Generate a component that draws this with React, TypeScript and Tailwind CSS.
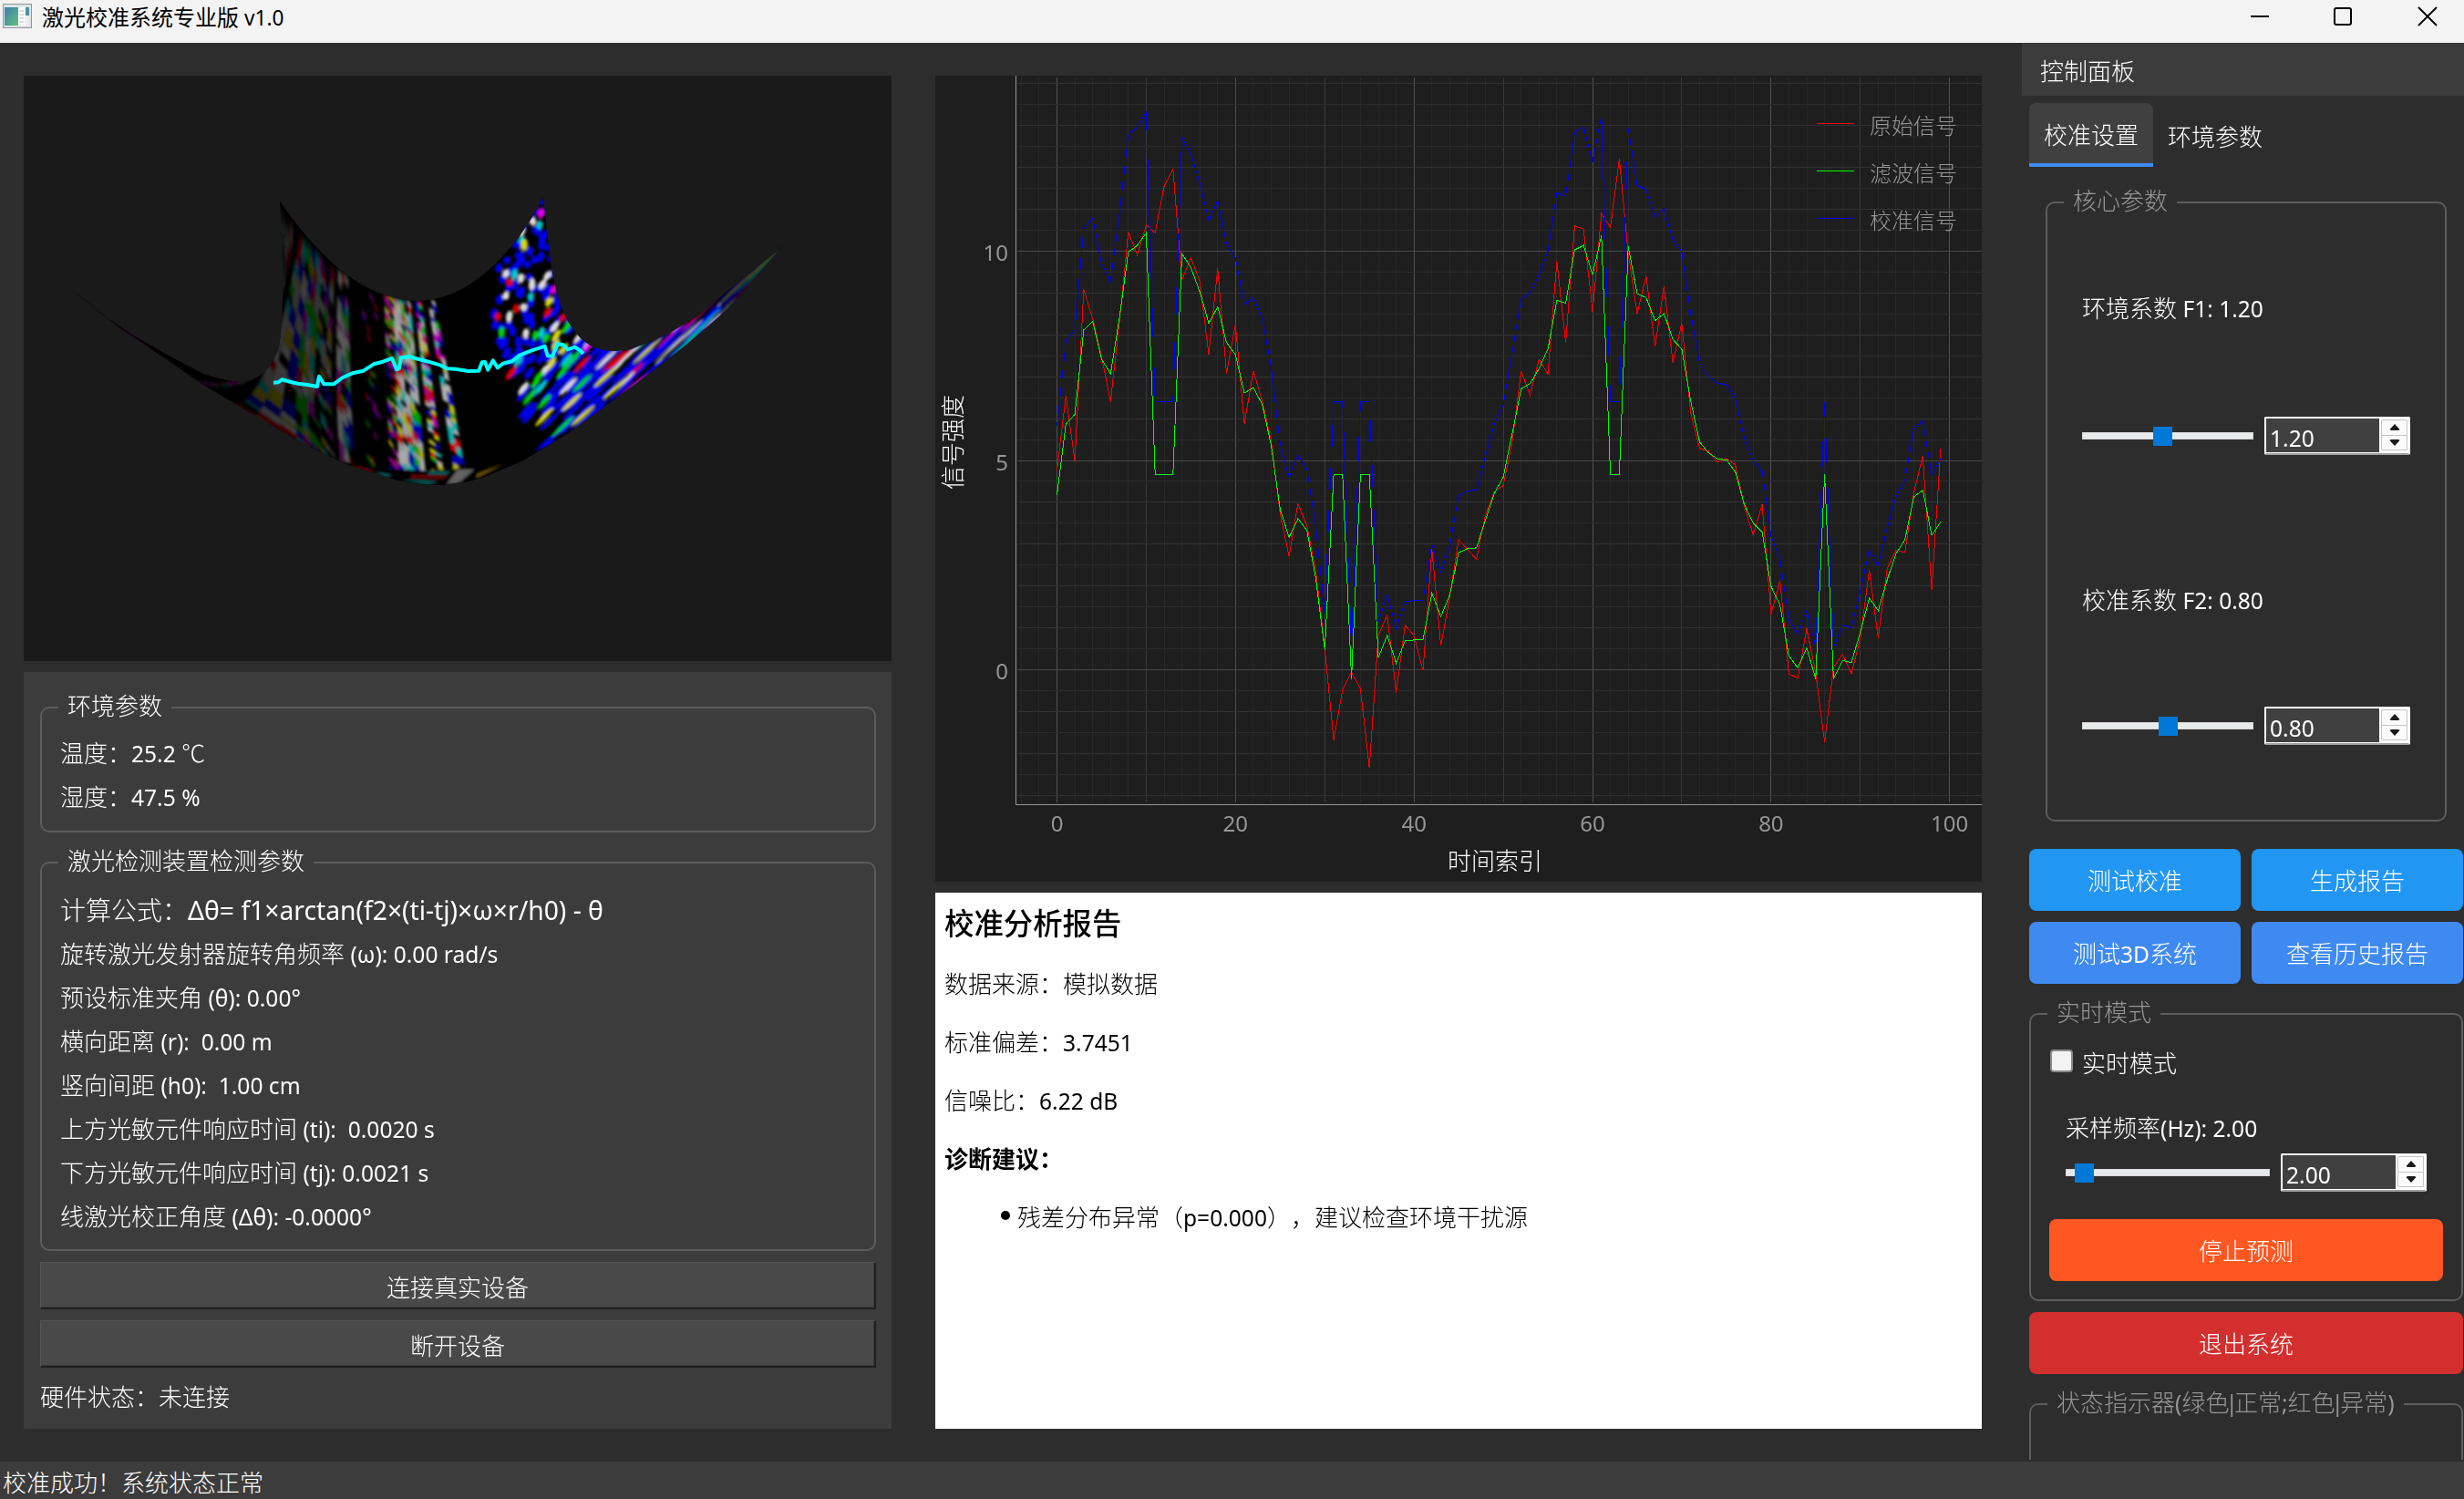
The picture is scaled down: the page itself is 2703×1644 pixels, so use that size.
import React from "react";

const FONT = "font-['Noto_Sans','Noto_Sans_CJK_SC',sans-serif]";

/* ---------- text ---------- */

// Latin runs are set slightly smaller than the ideographs beside them.
function T({ children, latin = "text-[0.945em]" }: { children: string; latin?: string }) {
  const parts = children.split(/([\u0020-\u024f\u0370-\u03ff]+)/).filter(Boolean);
  return (
    <>
      {parts.map((p, i) =>
        /^[\u0020-\u024f\u0370-\u03ff]/.test(p) ? (
          <span key={i} className={`leading-none font-normal ${/^\S+$/.test(p) && p.includes("|") ? "-mx-1" : ""} ${latin}`}>
            {p}
          </span>
        ) : (
          <span key={i} className="leading-none font-['Noto_Sans_CJK_SC']">{p}</span>
        ),
      )}
    </>
  );
}

/* ---------- 3D surface ---------- */

type P = [number, number];

const BACK: [number, number, number][] = [
  [0, 307, 221], [0.08, 330, 254], [0.2, 365, 289], [0.35, 408, 317], [0.5, 452, 329],
  [0.62, 486, 327], [0.75, 524, 308], [0.85, 552, 283], [0.93, 575, 250], [1, 596, 217],
];
const FRONT: [number, number, number][] = [
  [0, 68, 309], [0.02, 130, 355], [0.05, 185, 395], [0.08, 250, 440], [0.12, 325, 484],
  [0.225, 375, 512], [0.26, 389, 516], [0.37, 420, 526], [0.43, 438, 530], [0.495, 468, 532],
  [0.585, 512, 530], [0.7, 550, 516], [0.8, 592, 492], [0.88, 660, 445], [0.94, 730, 378],
  [0.97, 790, 322], [1, 859, 271],
];

function sample(k: [number, number, number][], u: number): P {
  for (let i = 1; i < k.length; i++) {
    if (u <= k[i][0]) {
      const f = (u - k[i - 1][0]) / (k[i][0] - k[i - 1][0]);
      return [k[i - 1][1] + f * (k[i][1] - k[i - 1][1]), k[i - 1][2] + f * (k[i][2] - k[i - 1][2])];
    }
  }
  return [k[k.length - 1][1], k[k.length - 1][2]];
}
const mix = (a: P, b: P, t: number): P => [a[0] + (b[0] - a[0]) * t, a[1] + (b[1] - a[1]) * t];

function surf(u: number, v: number): P {
  const a = sample(BACK, u);
  const d = sample(FRONT, u);
  const wl = Math.pow(Math.max(0, 1 - u / 0.3), 2);
  let b = mix(a, d, 0.33);
  let c = mix(a, d, 0.67);
  b = mix(b, [318, 400], wl);
  c = mix(c, [290, 530], wl);
  const m = 1 - v;
  const f = [m * m * m, 3 * m * m * v, 3 * m * v * v, v * v * v];
  return [
    f[0] * a[0] + f[1] * b[0] + f[2] * c[0] + f[3] * d[0],
    f[0] * a[1] + f[1] * b[1] + f[2] * c[1] + f[3] * d[1],
  ];
}

const DIM = ["#3e3e3e", "#343434", "#3e3e3e", "#3e003e", "#420000", "#003c3c", "#000044", "#3a3600", "#003a00"];
const EDGE = ["#2e2e2e", "#2a2a2a", "#380036", "#360000", "#2e2e2e", "#001c1c"];
const MID = ["#585858", "#505050", "#585858", "#600a10", "#004e4e", "#00005c", "#0a500a", "#500a50"];
const LIT = ["#a8a8a8", "#a0a0a0", "#a8a8a8", "#a8a8a8", "#aaaa14", "#00a8a8", "#0000a8", "#b80000", "#009c00"];
const STRIPE = ["#b0b0b0", "#b0b0b0", "#c80000", "#00b0b0", "#0000b8", "#c0c000", "#00a800", "#b800b8"];

// bands across the surface: [from, to, palette, fill ratio, run length, slant]
const BANDS: [number, number, string[], number, number, number][] = [
  [0, 0.06, EDGE, 0.8, 4, 0.05],
  [0.08, 0.17, DIM, 0.9, 4, 0.045],
  [0.17, 0.21, DIM, 0.6, 3, 0.045],
  [0.222, 0.26, MID, 0.92, 4, 0.04],
  [0.31, 0.37, ["#700000", "#000066", "#600060", "#006000"], 0.12, 1, 0.03],
  [0.395, 0.43, ["#a00000", "#0000a0", "#a0a000", "#009000", "#a000a0"], 0.55, 1, 0.03],
  [0.43, 0.495, LIT, 0.92, 2, 0.03],
  [0.51, 0.537, STRIPE, 0.85, 1, 0.02],
  [0.56, 0.588, STRIPE, 0.8, 2, 0.02],
];

function generator(seed: number) {
  let s = seed;
  return () => {
    s = (Math.imul(s, 1664525) + 1013904223) >>> 0;
    return s / 4294967296;
  };
}
const pt = (p: P) => p[0].toFixed(1) + " " + p[1].toFixed(1);

function buildCells() {
  const rnd = generator(77);
  const out: Record<string, string> = {};
  for (const [from, to, pal, fill, run, slant] of BANDS) {
    const cols = Math.max(2, Math.round((to - from) / 0.014));
    const rows = 44;
    for (let c = 0; c < cols; c++) {
      const u0 = from + ((to - from) * c) / cols;
      const u1 = from + ((to - from) * (c + 1)) / cols;
      for (let r = -1; r < rows; ) {
        const n = 1 + Math.floor(rnd() * run);
        const col = pal[Math.floor(rnd() * pal.length)];
        if (rnd() < fill) {
          const v0 = Math.max(0, r / rows);
          const v1 = Math.min(1, (r + n) / rows);
          out[col] =
            (out[col] || "") +
            `M${pt(surf(u0, v0))}L${pt(surf(u1, Math.min(1, v0 + slant)))}L${pt(surf(u1, Math.min(1, v1 + slant)))}L${pt(surf(u0, v1))}Z`;
        }
        r += n;
      }
    }
  }
  return out;
}
const CELLS = buildCells();

// speckles on the right wing: they stretch towards the far right corner
const SPECK = ["#dcdcdc", "#dcdcdc", "#dcdcdc", "#d8d800", "#d8d800", "#dd0000", "#e000e0", "#00d000", "#00c8c8"];

function buildSpecks() {
  const rnd = generator(4242);
  const list: { x: number; y: number; l: number; w: number; a: number; c: string }[] = [];
  for (let gy = 222; gy < 496; gy += 8) {
    for (let gx = 530; gx < 850; gx += 9) {
      const x = gx + rnd() * 8 - 4;
      const y = gy + rnd() * 8 - 4;
      const p = rnd();
      const q = rnd();
      const k = Math.floor(rnd() * SPECK.length);
      const left = y < 330 ? 533 + (330 - y) * 0.25 : y < 370 ? 533 + (y - 330) * 0.2 : 541 + (y - 370) * 0.4;
      if (x < left) continue;
      const t = Math.min(1, Math.max(0, (x - 590) / 90) + Math.max(0, (y - 380) / 110));
      const far = Math.min(1, Math.max(0, (x - 660) / 100));
      const density = Math.min(0.78, 0.45 + (x - left) / 220 + t * 0.1);
      if (p > density) continue;
      const blue = q < 0.64 + t * 0.12;
      list.push({
        x,
        y,
        l: 4.6 + t * 11 + rnd() * 3 + far * 12,
        w: (blue ? 4 - t * 1.5 : 3.6 - t * 1.6) - far,
        a: (t < 0.05 ? 100 : 122 + t * 16) - far * 2,
        c: blue ? "#0000e6" : SPECK[k],
      });
    }
  }
  return list.sort((m, n) => (m.c === "#0000e6" ? 0 : 1) - (n.c === "#0000e6" ? 0 : 1));
}
const SPECKS = buildSpecks();

const OUTLINE =
  "M68 309 L115 347 L150 370 L185 390 L223 410 L240 415 L255 418 L268 419 C285 416 300 402 306 380 C312 350 311 270 307 221 " +
  "C345 275 395 330 460 330 C510 329 560 285 596 217 C603 280 606 330 628 360 C640 378 655 385 676 385 L692 383 L708 377 L733 366 L765 347 L791 325 L859 270 " +
  "L797 340 L753 378 L701 418 L670 441 L625 474 L574 505 L529 524 L508 529 L485 532 L460 531 L434 526 L383 510 L351 496 L300 468 L255 441 L223 422 L185 396 L128 357 Z";

const TRACE: P[] = [
  [150, 659], [165, 658], [178, 649], [205, 656], [230, 662], [262, 666], [294, 672], [300, 638], [316, 664],
  [348, 664], [378, 642], [410, 628], [446, 620], [480, 598], [510, 590], [540, 579], [555, 616], [563, 613],
  [570, 577], [597, 573], [620, 580], [660, 590], [700, 602], [722, 613], [750, 614], [790, 621], [826, 620],
  [836, 592], [846, 591], [856, 617], [872, 586], [888, 610], [905, 596], [934, 589], [960, 569], [1000, 553],
  [1043, 539], [1052, 571], [1068, 572], [1086, 531], [1104, 535], [1118, 550], [1142, 542], [1158, 552], [1170, 563],
];

function Surface() {
  const line = TRACE.map(([x, y]) => `${(250 + x / 3).toFixed(1)},${(200 + y / 3).toFixed(1)}`).join(" ");
  return (
    <div className="h-[642px] w-[952px] bg-[#1a1a1a]">
      <svg width="952" height="642" viewBox="26 83 952 642" className="block">
        <defs>
          <clipPath id="bowl">
            <path d={OUTLINE} />
          </clipPath>
          <filter id="soft" x="0" y="0" width="1" height="1">
            <feGaussianBlur stdDeviation="1.4" />
          </filter>
          <linearGradient id="fade" gradientUnits="userSpaceOnUse" x1="68" y1="0" x2="330" y2="0">
            <stop offset="0" stopColor="#000" stopOpacity="0.8" />
            <stop offset="0.45" stopColor="#000" stopOpacity="0.5" />
            <stop offset="1" stopColor="#000" stopOpacity="0" />
          </linearGradient>
        </defs>
        <path d={OUTLINE} fill="#000" />
        <g clipPath="url(#bowl)">
          <g filter="url(#soft)">
            {Object.entries(CELLS).map(([c, d]) => (
              <path key={c} d={d} fill={c} />
            ))}
            {SPECKS.map((s, i) => (
              <ellipse
                key={i}
                cx={s.x.toFixed(1)}
                cy={s.y.toFixed(1)}
                rx={(s.l * 0.9).toFixed(1)}
                ry={s.w.toFixed(1)}
                fill={s.c}
                transform={`rotate(${s.a.toFixed(0)} ${s.x.toFixed(1)} ${s.y.toFixed(1)})`}
              />
            ))}
            <path d="M790 310 L870 260 L870 290 L790 350Z" fill="#000" fillOpacity="0.6" />
            <path d="M300 484 Q390 516 470 516 Q560 514 640 470 L640 540 L300 540Z" fill="#000" />
            <path d="M385 511 l20 4 l8 5 l-22 -5zM452 521 l40 1 l-8 3 l-35 -1z" fill="#700000" />
            <path d="M412 518 l18 3 l-8 3zM440 526 l40 2 l-10 3zM470 517 l24 0 l-4 3 l-20 0z" fill="#006060" />
            <path d="M502 515 l18 0 l-16 14 l-14 2z" fill="#626262" />
            <path d="M524 520 l28 -11 l-30 15z" fill="#80600a" />
            <rect x="60" y="200" width="270" height="330" fill="url(#fade)" />
          </g>
        </g>
        <polyline points={line} fill="none" stroke="#00ffff" strokeWidth="4" strokeLinejoin="round" />
      </svg>
    </div>
  );
}

/* ---------- chart ---------- */

const FILTERED = [
  4.18, 5.87, 6.1, 8.12, 8.32, 7.42, 7.07, 8.4, 9.98, 10.14, 10.44, 4.667, 4.667, 4.667, 9.94, 9.61, 9.03, 8.28, 8.67, 7.82,
  7.53, 6.61, 6.74, 6.34, 5.36, 3.84, 3.16, 3.61, 3.33, 2.17, 0.475, 4.667, 4.667, -0.22, 4.667, 4.667, 0.29, 0.82, 0.157, 0.69,
  0.71, 0.72, 1.83, 1.27, 1.78, 2.8, 2.89, 2.91, 3.58, 4.22, 4.6, 5.65, 6.71, 6.84, 7.19, 7.67, 8.83, 8.76, 10.03, 10.14,
  9.44, 10.37, 4.667, 4.667, 10.11, 8.98, 8.89, 8.34, 8.51, 7.89, 7.66, 6.42, 5.44, 5.18, 5.04, 5.01, 4.73, 3.95, 3.5, 3.29,
  1.99, 1.54, 0.33, 0.05, 0.52, -0.22, 4.667, -0.22, 0.22, 0.17, 0.9, 1.71, 1.41, 2.15, 2.77, 3.11, 4.13, 4.29, 3.21, 3.53,
];
const RAW = [
  4.77, 6.54, 4.99, 9.09, 8.38, 7.47, 6.4, 8.3, 10.46, 9.91, 10.62, 10.44, 11.55, 11.96, 9.31, 9.84, 9.28, 7.52, 9.59, 7.08,
  8.25, 5.88, 7.14, 6.42, 5.47, 3.73, 2.71, 3.97, 3.44, 2.35, 0.5, -1.68, -0.48, -0.06, -0.45, -2.35, 0.82, 1.31, -0.55, 1.07,
  0.81, -0.02, 2.88, 0.57, 1.73, 3.11, 2.87, 2.64, 3.69, 4.25, 4.4, 5.44, 7.14, 6.56, 7.41, 7.06, 9.76, 7.81, 10.61, 10.53,
  8.56, 10.9, 10.57, 12.2, 9.94, 8.51, 9.41, 7.72, 9.17, 7.34, 8.28, 6.13, 5.29, 5.22, 4.96, 5.05, 4.89, 3.91, 3.22, 3.95,
  1.33, 2.13, -0.1, -0.2, 0.98, -0.08, -1.73, 0.06, 0.37, -0.09, 0.75, 2.38, 0.75, 2.42, 2.86, 2.8, 4.24, 5.11, 1.9, 5.28,
];
const CALIBRATED = FILTERED.map((v) => 1.2 * v + 0.8);

const px = (i: number) => 133.5 + 9.792 * i;
const py = (v: number) => 651.5 - 45.9 * v;
const pts = (d: number[]) => d.map((v, i) => `${px(i).toFixed(1)},${py(v).toFixed(1)}`).join(" ");

const range = (a: number, b: number, step: number) => {
  const r: number[] = [];
  for (let x = a; x <= b + 1e-6; x += step) r.push(x);
  return r;
};

function Chart() {
  const legend: [string, string][] = [
    ["原始信号", "#ff0000"],
    ["滤波信号", "#00ff00"],
    ["校准信号", "#0000ff"],
  ];
  return (
    <svg width="1148" height="884" viewBox="0 0 1148 884" className="block bg-[#1e1e1e]">
      <g shapeRendering="crispEdges" strokeWidth="1" fill="none">
        {range(-4, 102, 2).map((x) => (
          <path key={"x" + x} d={`M${Math.floor(px(x)) + 0.5} 2V797`} stroke={x % 20 === 0 ? "#505050" : x % 10 === 0 ? "#3a3a3a" : "#282828"} />
        ))}
        {range(-3, 14, 0.5).map((y) => (
          <path key={"y" + y} d={`M90 ${Math.floor(py(y)) + 0.5}H1148`} stroke={y % 5 === 0 ? "#484848" : y % 1 === 0 ? "#323232" : "#2b2b2b"} />
        ))}
        <path d="M88.5 0V799.5H1148" stroke="#969696" />
        <polyline points={pts(RAW)} stroke="#ff0000" />
        <polyline points={pts(CALIBRATED)} stroke="#0000ff" />
        <polyline points={pts(FILTERED)} stroke="#00ff00" />
        {legend.map(([n, c], i) => (
          <path key={n} d={`M967 ${52.5 + 52 * i}H1008`} stroke={c} />
        ))}
      </g>
      <g fill="#969696" fontSize="24" className="font-['Noto_Sans']">
        {[0, 20, 40, 60, 80, 100].map((x) => (
          <text key={x} x={px(x)} y="829" textAnchor="middle">
            {x}
          </text>
        ))}
        {[0, 5, 10].map((y) => (
          <text key={y} x="80" y={py(y) + 10.5} textAnchor="end">
            {y}
          </text>
        ))}
      </g>
      <g className="font-['Noto_Sans_CJK_SC'] font-light">
        {legend.map(([n], i) => (
          <text key={n} x="1025" y={63.5 + 52 * i} fill="#969696" fontSize="24">
            {n}
          </text>
        ))}
        <text x="614" y="871" textAnchor="middle" fill="#ffffff" fontSize="26">
          时间索引
        </text>
        <text transform="translate(29 402) rotate(-90)" textAnchor="middle" fill="#ffffff" fontSize="26">
          信号强度
        </text>
      </g>
    </svg>
  );
}

/* ---------- widgets ---------- */

function Group({ title, className, muted, children }: { title: string; className: string; muted?: boolean; children?: React.ReactNode }) {
  return (
    <fieldset className={`min-w-0 rounded-[10px] border-2 border-[#5c5c5c] ${className}`}>
      <legend className={`ml-[18px] h-8 px-[10px] leading-[28px] ${muted ? "text-[#969696]" : ""}`}>
        <T>{title}</T>
      </legend>
      {children}
    </fieldset>
  );
}

function PlainButton({ label }: { label: string }) {
  return (
    <button className="mt-3 flex h-[52px] w-full items-center justify-center border-t border-r-2 border-b-2 border-l border-t-[#565656] border-r-[#1f1f1f] border-b-[#1f1f1f] border-l-[#565656] bg-[#494949] pt-[3px] font-light shadow-[inset_-1px_-1px_0_#3a3a3a]">
      <T>{label}</T>
    </button>
  );
}

function FlatButton({ label, className }: { label: string; className: string }) {
  return (
    <button className={`flex h-[68px] items-center justify-center rounded-lg pt-[2px] font-light ${className}`}>
      <span><T>{label}</T></span>
    </button>
  );
}

function SliderRow({ value, pos, width }: { value: string; pos: number; width: string }) {
  return (
    <div className="flex items-center">
      <div className={`flex h-2 items-center border border-[#d6d6d6] bg-[#e7eaea] ${width}`}>
        <div className="h-[21px] w-[21px] bg-[#0078d7]" style={{ marginLeft: pos - 1 }} />
      </div>
      <div className="ml-3 flex h-[42px] w-[160px] rounded-[2px] border-2 border-b-[#a0a0a0] bg-white">
        <div className="h-[38px] w-[124px] border-b border-white bg-[#404040] pl-[4px] leading-[42px]">
          <T>{value}</T>
        </div>
        <div className="mt-px ml-[2px] flex h-[34px] w-[29px] flex-col rounded-[1px] border border-[#c4c4c4] bg-[#fbfbfb]">
          <div className="flex flex-1 items-center justify-center border-b border-[#c4c4c4]">
            <svg width="12" height="7" viewBox="0 0 12 7">
              <path d="M6 0 L11.5 6 L10 7 H2 L0.5 6Z" fill="#1a1a1a" />
            </svg>
          </div>
          <div className="flex flex-1 items-center justify-center">
            <svg width="12" height="7" viewBox="0 0 12 7">
              <path d="M6 7 L11.5 1 L10 0 H2 L0.5 1Z" fill="#1a1a1a" />
            </svg>
          </div>
        </div>
      </div>
    </div>
  );
}

/* ---------- page sections ---------- */

function TitleBar() {
  return (
    <header className="flex h-[47px] items-start bg-[#f3f3f3] text-black">
      <svg width="32" height="28" viewBox="0 0 32 28" className="mt-[4px] ml-[3px]">
        <defs>
          <linearGradient id="app" x1="0" y1="0" x2="1" y2="1">
            <stop offset="0" stopColor="#3f7fb0" />
            <stop offset="1" stopColor="#5fc07a" />
          </linearGradient>
        </defs>
        <rect x="0.5" y="0.5" width="31" height="26" fill="#dfe3e6" stroke="#8d979d" />
        <rect x="2" y="4" width="15" height="20" fill="url(#app)" />
        <rect x="17" y="4" width="8" height="20" fill="#fafafa" />
        <rect x="25" y="4" width="4" height="9" fill="#4c90a8" />
        <rect x="25" y="13" width="4" height="11" fill="#e9ecee" />
        <path d="M18.500 8h5M18.500 12h5M18.500 16h5M18.500 20h5" stroke="#b9bec2" />
      </svg>
      <h1 className="ml-[11px] h-[38px] text-[24px] leading-[38px]">
        <T>激光校准系统专业版 v1.0</T>
      </h1>
      <div className="ml-auto flex items-start pt-[7px] pr-[29px]">
        <svg width="22" height="22" viewBox="0 0 22 22">
          <path d="M1 11H21" stroke="#000" strokeWidth="2" />
        </svg>
        <svg width="22" height="22" viewBox="0 0 22 22" className="ml-[69px]">
          <rect x="2" y="2" width="18" height="18" rx="2" fill="none" stroke="#000" strokeWidth="2" />
        </svg>
        <svg width="22" height="22" viewBox="0 0 22 22" className="ml-[71px]">
          <path d="M1 1L21 21M21 1L1 21" stroke="#000" strokeWidth="1.800" />
        </svg>
      </div>
    </header>
  );
}

const DEVICE_ROWS = [
  "旋转激光发射器旋转角频率 (ω): 0.00 rad/s",
  "预设标准夹角 (θ): 0.00°",
  "横向距离 (r):  0.00 m",
  "竖向间距 (h0):  1.00 cm",
  "上方光敏元件响应时间 (ti):  0.0020 s",
  "下方光敏元件响应时间 (tj): 0.0021 s",
  "线激光校正角度 (Δθ): -0.0000°",
];

function LeftPanel() {
  return (
    <section className="mt-3 h-[830px] bg-[#3c3c3c] pt-[23px] pr-[17px] pl-[18px] font-light">
      <Group title="环境参数" className="h-[153px]">
        <div className="pt-[10px] pl-[20px] leading-[48px]">
          <p><T>温度：25.2 ℃</T></p>
          <p><T>湿度：47.5 %</T></p>
        </div>
      </Group>
      <Group title="激光检测装置检测参数" className="mt-[17px] h-[442px]">
        <div className="pt-[12px] pl-[20px] leading-[48px]">
          <p className="text-[28px]"><T latin="text-[1.01em]">计算公式：Δθ= f1×arctan(f2×(ti-tj)×ω×r/h0) - θ</T></p>
          {DEVICE_ROWS.map((r) => (
            <p key={r}><T>{r}</T></p>
          ))}
        </div>
      </Group>
      <PlainButton label="连接真实设备" />
      <PlainButton label="断开设备" />
      <p className="mt-2 leading-[48px]"><T>硬件状态：未连接</T></p>
    </section>
  );
}

function Report() {
  return (
    <article className="mt-3 h-[588px] bg-white pl-[10px] font-light text-black">
      <h2 className="pt-[9px] text-[32.4px] leading-[48px] font-medium"><T>校准分析报告</T></h2>
      <div className="pt-[11px] leading-[64px]">
        <p><T>数据来源：模拟数据</T></p>
        <p><T>标准偏差：3.7451</T></p>
        <p><T>信噪比：6.22 dB</T></p>
        <p className="font-bold"><T>诊断建议：</T></p>
        <div className="flex items-center pl-[62px]">
          <span className="mr-[8px] -mt-1 h-[10px] w-[10px] rounded-full bg-black" />
          <p className="[text-spacing-trim:space-all]"><T>残差分布异常（p=0.000），建议检查环境干扰源</T></p>
        </div>
      </div>
    </article>
  );
}

function ControlDock() {
  return (
    <aside className="ml-[44px] h-[1554px] w-[485px] shrink-0 overflow-hidden font-light">
      <h2 className="h-[58px] bg-[#3c3c3c] pl-[20px] leading-[62px]"><T>控制面板</T></h2>
      <div className="pl-2">
        <nav className="mt-2 flex h-[70px]">
          <div className="w-[136px] rounded-t-[7px] border-b-4 border-[#3f8af1] bg-[#404040] pl-[16px] leading-[70px]"><T>校准设置</T></div>
          <div className="pl-[16px] leading-[74px]"><T>环境参数</T></div>
        </nav>
        <Group title="核心参数" muted className="mt-[23px] ml-[18px] h-[695px] w-[440px]">
          <div className="pl-[38px]">
            <p className="pt-[76px] leading-[48px]"><T>环境系数 F1: 1.20</T></p>
            <div className="mt-[95px]"><SliderRow value="1.20" pos={78} width="w-[188px]" /></div>
            <p className="mt-[135px] leading-[48px]"><T>校准系数 F2: 0.80</T></p>
            <div className="mt-[93px]"><SliderRow value="0.80" pos={84} width="w-[188px]" /></div>
          </div>
        </Group>
        <div className="mt-[30px] grid w-[476px] grid-cols-2 gap-3">
          <FlatButton label="测试校准" className="bg-[#2196f3]" />
          <FlatButton label="生成报告" className="bg-[#2196f3]" />
          <FlatButton label="测试3D系统" className="bg-[#3f8af1]" />
          <FlatButton label="查看历史报告" className="bg-[#3f8af1]" />
        </div>
        <Group title="实时模式" muted className="mt-[17px] h-[331px] w-[476px]">
          <div className="pl-5">
            <div className="flex h-[61px] items-center pt-[13px]">
              <span className="-mt-[3px] ml-px h-[25px] w-[25px] rounded-[4px] border-2 border-[#8a8a8a] bg-[#f3f3f3]" />
              <span className="ml-[10px] pt-[2px] leading-[48px]"><T>实时模式</T></span>
            </div>
            <div className="pl-[18px]">
              <p className="mt-[24px] leading-[48px]"><T>采样频率(Hz): 2.00</T></p>
              <div className="mt-[4px]"><SliderRow value="2.00" pos={10} width="w-[224px]" /></div>
            </div>
            <FlatButton label="停止预测" className="mt-[30px] w-[432px] bg-[#ff5722]" />
          </div>
        </Group>
        <FlatButton label="退出系统" className="mt-[12px] w-[476px] bg-[#d32f2f]" />
        <Group title="状态指示器(绿色|正常;红色|异常)" muted className="mt-[17px] h-[120px] w-[476px]" />
      </div>
    </aside>
  );
}

export default function App() {
  return (
    <div className={`flex h-[1644px] w-[2703px] flex-col overflow-hidden bg-[#2d2d2d] text-[26px] whitespace-pre text-white ${FONT}`}>
      <TitleBar />
      <main className="flex h-[1556px]">
        <div className="mt-[36px] ml-[26px] w-[952px] shrink-0">
          <Surface />
          <LeftPanel />
        </div>
        <div className="mt-[36px] ml-[48px] w-[1148px] shrink-0">
          <Chart />
          <Report />
        </div>
        <ControlDock />
      </main>
      <footer className="h-[41px] bg-[#3c3c3c] pl-[3px] leading-[46px] font-light"><T>校准成功！系统状态正常</T></footer>
    </div>
  );
}
